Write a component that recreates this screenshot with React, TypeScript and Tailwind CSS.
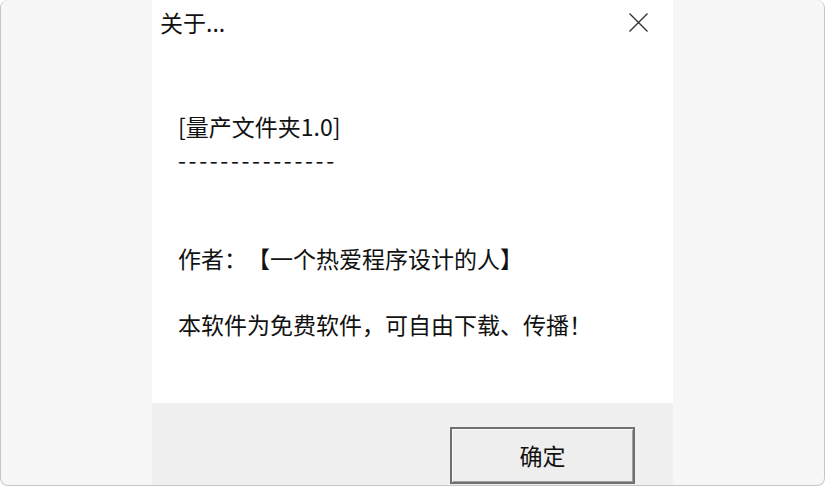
import React from "react";

export default function App() {
  const font = { fontFamily: '"Noto Sans CJK SC", "Noto Sans", sans-serif' };
  return (
    <div
      className="w-[825px] h-[486px] bg-[#f7f7f7] flex justify-center rounded-[8px] border-x border-b border-[#c6c6c6] overflow-hidden text-[#111] [text-spacing-trim:space-all]"
      style={font}
    >
      <div className="w-[521px] h-full flex flex-col bg-white">
        <div className="h-[45px] flex items-center justify-between pl-[8px] pr-[25px] shrink-0">
          <span className="text-[23px] leading-none">关于...</span>
          <svg width="19" height="19" viewBox="0 0 19 19" className="block">
            <path d="M0.5 0.5 L18.5 18.5 M18.5 0.5 L0.5 18.5" stroke="#333" strokeWidth="1.4" fill="none" />
          </svg>
        </div>
        <div className="flex-1 pl-[26px] pt-[65px] text-[23px] leading-[33px]">
          <div>[量产文件夹1.0]</div>
          <div className="tracking-[2.6px]">---------------</div>
          <div>&nbsp;</div>
          <div>&nbsp;</div>
          <div>作者：【一个热爱程序设计的人】</div>
          <div>&nbsp;</div>
          <div>本软件为免费软件，可自由下载、传播！</div>
        </div>
        <div className="h-[82px] shrink-0 bg-[#f0f0f0] flex justify-end items-start pt-[24px] pr-[38px]">
          <div className="w-[185px] h-[57px] border-2 border-[#707070] bg-[#eeeeee] shadow-[inset_1px_1px_0_#fafafa,inset_-1px_-1px_0_#a0a0a0] flex items-center justify-center text-[23px] text-[#111]">
            确定
          </div>
        </div>
      </div>
    </div>
  );
}
